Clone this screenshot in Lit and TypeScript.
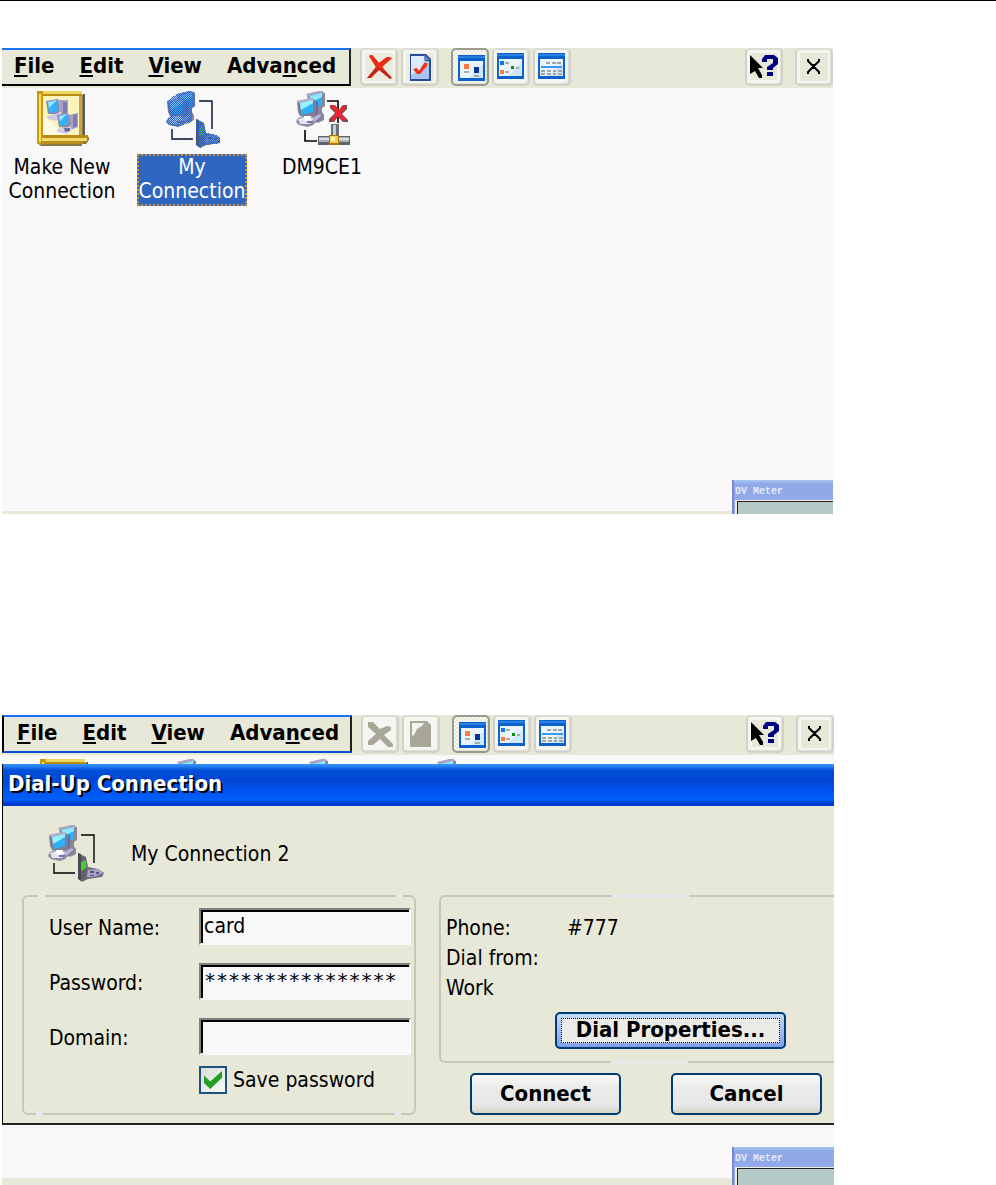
import { LitElement, html, svg, css, nothing } from "lit";
import { customElement, property } from "lit/decorators.js";

const computers = svg`
  <g>
    <path d="M11 3L24 0L29 2V15L26 17V21L28 24V29L22 32L14 24Z" fill="#8a8798"/>
    <path d="M10 3L23 0H27V3L12 6Z" fill="#aca6c6"/>
    <path d="M13 5L26 2V14L15 17Z" fill="#27b4f2"/>
    <path d="M14 5L26 2V6L14 12Z" fill="#8fe8fc"/>
    <path d="M17 11L22 10V23L27 24L21 31L15 33V24Z" fill="#6c6aa8"/>
    <path d="M1 10L16 7L20 10V22L17 26L4 25L2 21Z" fill="#807c94"/>
    <path d="M1 10L16 7L18 9L3 12Z" fill="#b8b4d0"/>
    <path d="M4 12L17 9V21L6 24Z" fill="#2cb2f4"/>
    <path d="M4 12L17 9V12L5 19Z" fill="#9af0ff"/>
    <path d="M2 27L7 25H17L24 22L27 24L17 34L12 36L3 34L0 31Z" fill="#8e8ba0"/>
    <path d="M2 28L8 26L18 27L14 33H4Z" fill="#e4e2f2"/>
    <path d="M8 25H15V29L9 30Z" fill="#ffffff"/>
    <path d="M17 27L24 23L25 25L18 31Z" fill="#bbb6dd"/>
    <rect x="11" y="30" width="5" height="2" fill="#7673a8"/>
  </g>`;

const bookIcon = html`<svg class="glyph" viewBox="0 0 56 58" aria-hidden="true">
  <path d="M3 0H48V4H50V46H55V49L52 53H48V55H7L3 52Z" fill="#8b7a4a"/>
  <path d="M3 0H9V47L7 54L3 52Z" fill="#c89a10"/>
  <path d="M5 3H7V51H5Z" fill="#f3df6a"/>
  <path d="M9 0H48V4H9Z" fill="#ecd760"/>
  <path d="M9 3H48V5H9Z" fill="#b78b10"/>
  <path d="M9 5H47V45H9Z" fill="#fdf3bc"/>
  <path d="M9 45V24L32 45Z" fill="#fffbe2"/>
  <path d="M45 5H48V45H45Z" fill="#c9a53c"/>
  <path d="M49 3H51V45H49Z" fill="#5b5b64"/>
  <path d="M9 44H54V47H9Z" fill="#b98b12"/>
  <path d="M8 47H53V50H8Z" fill="#f0dc6c"/>
  <path d="M7 50H49V53H7Z" fill="#b8901e"/>
  <path d="M24 9L34 9V22L27 25Z" fill="#a5a2c6"/>
  <path d="M29 11H33V21L29 23Z" fill="#7f7caf"/>
  <path d="M12 10L24 8L26 20L24 23L14 23Z" fill="#8a88b4"/>
  <path d="M14 11L24 9V20L15 22Z" fill="#2fb2f6"/>
  <path d="M14 11L23 9L15 17Z" fill="#9be4ff"/>
  <path d="M13 25L25 22L27 25L22 30L14 28Z" fill="#cfcae0"/>
  <path d="M34 24L44 22V36L37 39Z" fill="#a5a2c6"/>
  <path d="M39 24L43 23V35L39 37Z" fill="#7f7caf"/>
  <path d="M23 24L34 22L37 34L34 37L25 36Z" fill="#8a88b4"/>
  <path d="M25 25L34 23V33L26 35Z" fill="#2fb2f6"/>
  <path d="M25 25L33 23L26 30Z" fill="#9be4ff"/>
  <path d="M23 38L35 36L39 38L32 43L23 41Z" fill="#d4cfe4"/>
  <path d="M30 37H36V40L31 41Z" fill="#6967a0"/>
</svg>`;

const silhouette = "M11 3L24 0L29 2V15L26 17V31L17 34L12 36L3 34L0 31L4 25L1 10ZM30 28L38 32L40 42L50 44L56 48L54 52L40 54L34 57L31 54Z";

const phoneIcon = (selected: boolean) => html`<svg class="glyph" viewBox=${selected ? "-2 0 56 58" : "0 0 56 58"} aria-hidden="true">
  <defs>
    <pattern id="dither" width="2" height="2" patternUnits="userSpaceOnUse">
      <rect width="1" height="1" fill="#2b62c4"/><rect x="1" y="1" width="1" height="1" fill="#2b62c4"/>
    </pattern>
  </defs>
  <path d="M33 10H46V38M6 38V48H27" fill="none" stroke="#000" stroke-width="1.4"/>
  ${computers}
  <path d="M30 28L38 32L40 42L50 44L56 48L54 52L40 54L34 57L31 54Z" fill="#6e6c7c"/>
  <path d="M30 28L33 29V56L30 54Z" fill="#4a4852"/>
  <path d="M33 31L38 34V54H33Z" fill="#5f6468"/>
  <path d="M33 37L38 35V43L33 46Z" fill="#44d02c"/>
  <path d="M40 45L50 44L55 48L46 52L39 52Z" fill="#a7a2c8"/>
  <path d="M42 46H46V48H42ZM48 47H51V49H48ZM42 50H46V51H42Z" fill="#565280"/>
  ${selected ? svg`
    <path d=${silhouette} fill="#2f86ec" fill-opacity=".35"/>
    <path d=${silhouette} fill="url(#dither)" shape-rendering="crispEdges"/>
    <path d="M33 10H46V38M6 38V48H27" fill="none" stroke="#2f66c0" stroke-width="1.4" stroke-dasharray="1 2"/>` : nothing}
</svg>`;

const lanIcon = html`<svg class="glyph" viewBox="-2 0 56 58" aria-hidden="true">
  <path d="M31 10H42V32M9 39V50H21" fill="none" stroke="#000" stroke-width="1.6"/>
  ${computers}
  <path d="M34 14H39L43 19L47 14H51V18L46 23L52 29V31H47L42 26L38 31H33V28L39 22L34 17Z" fill="#7b4c50"/>
  <path d="M34 14H38L43 19L46 15H50L45 22L50 29H46L42 25L37 30H34L40 22Z" fill="#ee2330"/>
  <path d="M35 33H43V46H35Z" fill="#6d7078"/><path d="M37 34H40V46H37Z" fill="#c9ced4"/>
  <path d="M22 45H54V54H22Z" fill="#5f626a"/><path d="M23 46H53V51H23Z" fill="#a9afb6"/><path d="M23 47H53V49H23Z" fill="#d8dce0"/>
  <path d="M33 44H43V54H33Z" fill="#a87a08"/><path d="M34 45H42V52H34Z" fill="#f6cf54"/><path d="M35 46H39V50H35Z" fill="#fff3b0"/>
</svg>`;

const deleteIcon = html`<svg class="tool" viewBox="0 0 28 28" aria-hidden="true">
  <rect width="28" height="28" fill="#ecebdf"/>
  <path d="M4 3L7 2L14 10L22 4L27 5L17 14L27 25L25 26L14 17L6 25L2 25L11 14Z" fill="#c02412"/>
  <path d="M4 3L7 2L14 10L22 4L27 5L17 13L20 18L14 15L9 17L11 13Z" fill="#f02c10"/>
</svg>`;
const deleteOffIcon = html`<svg class="tool" viewBox="0 0 28 28" aria-hidden="true">
  <path d="M2 2H7L14 9L21 6L25 7V10L18 15L27 24V27H22L14 19L7 25H2V21L10 14L2 7Z" fill="#a9a898"/>
</svg>`;
const checkIcon = html`<svg class="tool" viewBox="0 0 28 28" aria-hidden="true">
  <rect width="28" height="28" fill="#ecebdf"/>
  <path d="M4 1H20L25 6V28H4Z" fill="#2a4a96"/><path d="M5 3H19V8H23V26H5Z" fill="#a9c6f2"/>
  <path d="M5 3H18V14L5 22Z" fill="#dceafc"/><path d="M18 2L24 7H18Z" fill="#7088c0"/>
  <path d="M7 16L11 15L13 18L18 10L21 10V13L14 21H11Z" fill="#f2301c"/>
</svg>`;
const checkOffIcon = html`<svg class="tool" viewBox="0 0 28 28" aria-hidden="true">
  <path d="M4 1H20L26 6V28H4Z" fill="#f8f8f8"/>
  <path d="M3 1H20L24 5V27H3Z" fill="#a9a898"/><path d="M5 3H17L15 6L10 9L7 15L5 16Z" fill="#f4f4f2"/>
</svg>`;
const frame = svg`<rect width="27" height="26" fill="#0b62cc"/><rect x="2" y="6" width="23" height="17" fill="#eaf4fd"/><path d="M11 23L25 9V23Z" fill="#cfe6fb"/><rect y="1" width="27" height="2" fill="#2b7fe0"/>`;
const largeIcon = html`<svg class="tool shifted" viewBox="0 0 28 28" aria-hidden="true">${frame}
  <rect x="6" y="9" width="5" height="5" fill="#fb7a42"/><rect x="6" y="16" width="5" height="2" fill="#aaa"/>
  <rect x="16" y="12" width="5" height="6" fill="#0a329c"/><rect x="16" y="20" width="5" height="2" fill="#aaa"/></svg>`;
const smallIcon = html`<svg class="tool" viewBox="0 0 28 28" aria-hidden="true">${frame}
  <rect x="3" y="8" width="4" height="4" fill="#0b78e4"/><rect x="8" y="9" width="4" height="2" fill="#aaa"/>
  <rect x="3" y="17" width="4" height="4" fill="#fb7a42"/><rect x="8" y="18" width="4" height="2" fill="#aaa"/>
  <rect x="14" y="13" width="3" height="3" fill="#108c14"/><rect x="19" y="14" width="3" height="2" fill="#aaa"/></svg>`;
const detailIcon = html`<svg class="tool" viewBox="0 0 28 28" aria-hidden="true">${frame}
  <rect x="3" y="13" width="21" height="2" fill="#3c9af0"/>
  <path d="M8 9h4v2h-4zM14 9h4v2h-4zM19 9h4v2h-4zM3 17h4v2h-4zM9 17h4v2h-4zM15 17h3v2h-3zM20 17h4v2h-4zM3 20h4v2h-4zM9 20h4v2h-4zM15 20h3v2h-3zM20 20h4v2h-4z" fill="#a4a4a4"/></svg>`;
const helpIcon = html`<svg class="tool wide" viewBox="0 0 30 28" aria-hidden="true">
  <rect x="2" width="26" height="27" fill="#e7e8d8"/>
  <path d="M1 2L14 15H9L13 22V25H10L6 18L1 21Z" fill="#000"/>
  <path d="M13 9V6L16 2H25L29 5V11L24 15V17H18V14L24 10V6H18V9ZM18 19H24V23H18Z" fill="#000084"/></svg>`;
const closeIcon = html`<svg class="tool" viewBox="0 0 28 28" aria-hidden="true">
  <rect width="28" height="28" fill="#e7e8d8"/>
  <path d="M8 6V8L12 12H15L19 8V6M8 21V19L12 15H15L19 19V21M12 13.500H15" fill="none" stroke="#000" stroke-width="2"/></svg>`;

const base = css`
  * { box-sizing: border-box; }
  button { font: inherit; color: inherit; margin: 0; padding: 0; border: 0; background: none; }
  svg { display: block; flex: none; }
`;

@customElement("tool-bar")
export class ToolBar extends LitElement {
  @property({ type: Boolean }) inactive = false;

  static styles = [base, css`
    :host { display: block; background: #e7e8d8; font: bold 22px/24px "DejaVu Sans Condensed", "DejaVu Sans", sans-serif; font-stretch: condensed; }
    .bar { display: flex; height: 40px; }
    .menu { display: flex; gap: 25px; align-items: center; width: 349px; height: 38px; padding: 0 0 2px 12px;
      border-top: 2px solid #1a72f0; border-right: 2px solid #222; border-bottom: 2px solid #000; }
    .menu.inactive { padding-left: 13px; border-left: 2px solid #000; border-bottom-color: #0b4ed4; width: 350px; }
    u { text-decoration-thickness: 2px; text-underline-offset: 2px; text-decoration-skip-ink: none; }
    .tools { display: flex; flex: 1; gap: 3px; padding-left: 9px; }
    .key { display: flex; align-items: center; justify-content: center; width: 38px; height: 38px; border-radius: 5px;
      background: #f5f5f2; border: 2px solid #d2d1c6; border-top-color: #dddcd2; box-shadow: inset -1px -1px 1px #dddcd4; }
    .key.on { border-color: #9b9a8f; background: repeating-conic-gradient(#fafaf8 0 25%, #e7e8d8 0 50%) 0 0 / 4px 4px; }
    .gap { width: 6px; }
    .end { display: flex; gap: 12px; }
    .tool { width: 28px; height: 28px; }
    .wide { width: 30px; }
    .shifted { margin: 4px 0 0 3px; }
  `];

  render() {
    return html`<div class="bar">
      <nav class="menu ${this.inactive ? "inactive" : ""}">
        <button><u>F</u>ile</button><button><u>E</u>dit</button><button><u>V</u>iew</button><button>Adva<u>n</u>ced</button>
      </nav>
      <div class="tools">
        <button class="key" aria-label="Delete" ?disabled=${this.inactive}>${this.inactive ? deleteOffIcon : deleteIcon}</button>
        <button class="key" aria-label="Properties" ?disabled=${this.inactive}>${this.inactive ? checkOffIcon : checkIcon}</button>
        <span class="gap"></span>
        <button class="key on" aria-label="Large icons">${largeIcon}</button>
        <button class="key" aria-label="Small icons">${smallIcon}</button>
        <button class="key" aria-label="Details">${detailIcon}</button>
      </div>
      <div class="end">
        <button class="key" aria-label="Help">${helpIcon}</button>
        <button class="key" aria-label="Close">${closeIcon}</button>
      </div>
    </div>`;
  }
}

@customElement("meter-window")
export class MeterWindow extends LitElement {
  static styles = css`
    :host { display: block; overflow: hidden; background: linear-gradient(#a9c6f4, #8fa9e6 4px, #93a9ea 16px, #8fb0e8); border-left: 2px solid #7f84d8; }
    .name { padding: 4px 0 0 1px; height: 20px; box-sizing: border-box; font: bold 10px/16px "Liberation Mono", monospace; color: #e4eafc; }
    .screen { height: 20px; margin-left: 1px; border: 2px solid #eeeedc; border-width: 1px 0 0 2px; }
    .glass { height: 20px; border: 1px solid #222; border-width: 1px 0 0 1px; background: #b5cac7; }
  `;
  render() {
    return html`<div class="name">DV Meter</div><div class="screen"><div class="glass"></div></div>`;
  }
}

@customElement("dial-dialog")
export class DialDialog extends LitElement {
  static styles = [base, css`
    :host { display: block; overflow: hidden; background: #e7e8d8; border-left: 1px solid #000; border-bottom: 2px solid #222;
      font: 21px/24px "DejaVu Sans Condensed", "DejaVu Sans", sans-serif; font-stretch: condensed; color: #000; }
    h1 { margin: 0; height: 42px; padding: 8px 0 0 5px; font-size: 22px; line-height: 24px; color: #fff; text-shadow: 2px 2px 0 #000;
      background: linear-gradient(#3b93fa 0, #2078f0 3px, #0450d8 6px, #0046d2 16px, #0053f0 26px, #0060fa 36px, #003bd0 39px, #0038cc); }
    .who { display: flex; align-items: center; gap: 27px; height: 89px; padding: 6px 0 0 45px; }
    .glyph { width: 56px; height: 58px; }
    .cols { display: grid; grid-template-columns: 394px 1fr; column-gap: 23px; padding: 0 0 8px 19px; align-items: start; }
    fieldset { position: relative; margin: 0; min-width: 0; border: 2px solid #c7c7b5; border-radius: 6px; }
    fieldset::before { content: ""; position: absolute; inset: -2px; pointer-events: none; background-repeat: no-repeat; }
    .login { display: grid; grid-template-columns: 150px 1fr; row-gap: 18px; height: 220px; align-content: start; padding: 11px 3px 0 25px; }
    .login::before { background-image: linear-gradient(#e8e8f8, #e8e8f8), linear-gradient(#e8e8f8, #e8e8f8), linear-gradient(#e8e8f8, #e8e8f8), linear-gradient(#e8e8f8, #e8e8f8);
      background-size: 7px 2px; background-position: 16px 0, 374px 0, 14px 100%, 372px 100%; }
    .login label { align-self: center; padding-top: 2px; }
    .text { width: 100%; height: 37px; margin: 0; border-radius: 0; font: inherit; color: #000; background: #f8f8f8; outline: none; padding: 0 0 2px 3px;
      border: 2px solid #f8f8f8; border-top-color: #808080; border-left-color: #808080; box-shadow: inset 2px 2px 0 #000; }
    .stars { font-family: "DejaVu Sans Mono", monospace; font-size: 20px; font-stretch: normal; padding-bottom: 4px; }
    .login .save label { padding: 0; }
    .save { grid-column: 2; display: flex; gap: 6px; align-items: center; margin-top: -7px; }
    .tick { appearance: none; width: 28px; height: 28px; margin: 0; border: 2px solid #1c5180; display: grid; place-items: center; background: linear-gradient(135deg, #dcdcd8, #f8f8f8); }
    .tick:checked::before { content: ""; width: 18px; height: 18px; background: #21a121; clip-path: polygon(0 25%, 35% 58%, 100% 0, 100% 38%, 35% 100%, 0 66%); }
    .side { min-width: 0; }
    .dial { height: 168px; border-right: 0; border-radius: 6px 0 0 6px; padding: 19px 48px 0 5px; }
    .dial::before { background-image: linear-gradient(#e8e8f8, #e8e8f8), linear-gradient(#e8e8f8, #e8e8f8); background-size: 77px 2px; background-position: 173px 0, 172px 100%; }
    dl { display: grid; grid-template-columns: 121px 1fr; row-gap: 6px; margin: 0; }
    dt, dd { margin: 0; }
    .full { grid-column: 1 / -1; }
    .push { height: 42px; border: 2px solid #003c74; border-radius: 5px; font-size: 22px; font-weight: bold; text-align: center;
      background: linear-gradient(#fafafa, #ebebea 30%, #e6e6e6 80%, #d6d4c6); }
    .props { display: block; width: 231px; height: 37px; margin: 12px 0 0 auto; padding: 4px; background: linear-gradient(#c4dcfa, #7f9fec); }
    .inner { display: block; height: 25px; line-height: 23px; background: #ebebe8; outline: 1px dotted #000; outline-offset: -1px; }
    .acts { display: flex; justify-content: flex-end; gap: 50px; padding: 10px 12px 0 0; }
    .acts .push { width: 151px; }
  `];

  render() {
    return html`
      <h1>Dial-Up Connection</h1>
      <div class="who">${phoneIcon(false)}<span>My Connection 2</span></div>
      <div class="cols">
        <fieldset class="login">
          <label for="user">User Name:</label><input class="text" id="user" value="card">
          <label for="pass">Password:</label><input class="text stars" id="pass" autocomplete="off" value="****************">
          <label for="domain">Domain:</label><input class="text" id="domain">
          <div class="save"><input class="tick" type="checkbox" id="save" checked><label for="save">Save password</label></div>
        </fieldset>
        <div class="side">
          <fieldset class="dial">
            <dl><dt>Phone:</dt><dd>#777</dd><dt class="full">Dial from:</dt><dd class="full">Work</dd></dl>
            <button class="push props"><span class="inner">Dial Properties...</span></button>
          </fieldset>
          <div class="acts"><button class="push">Connect</button><button class="push">Cancel</button></div>
        </div>
      </div>`;
  }
}

@customElement("app-root")
export class AppRoot extends LitElement {
  static styles = [base, css`
    :host { display: block; background: #fff; color: #000; border-top: 1px solid #000;
      font: 21px/24px "DejaVu Sans Condensed", "DejaVu Sans", sans-serif; font-stretch: condensed; }
    main { display: flex; flex-direction: column; gap: 201px; padding: 47px 162px 0 2px; }
    .window { position: relative; margin-right: 1px; background: #f8f8f8; overflow: hidden; }
    .lower { margin-right: 0; }
    .items { display: flex; gap: 16px; align-items: flex-start; min-height: 423px; padding: 3px 0 0 3px; }
    .item { display: flex; flex-direction: column; align-items: center; gap: 5px; width: 114px; }
    .glyph { width: 56px; height: 58px; }
    .label { padding: 1px 2px 3px; }
    .chosen { background: #2f66c0; color: #fff; outline: 2px dotted #d09030; outline-offset: -2px; }
    .peek { display: flex; gap: 74px; height: 9px; padding: 4px 0 0 35px; overflow: hidden; }
    .rest { height: 53px; }
    .status { height: 3px; background: #e7e8d8; }
    .lower .status { height: 7px; }
    meter-window { position: absolute; right: 0; bottom: 0; width: 101px; height: 34px; }
    .lower meter-window { width: 102px; height: 38px; }
  `];

  render() {
    return html`<main>
      <section class="window">
        <tool-bar></tool-bar>
        <div class="items">
          <button class="item">${bookIcon}<span class="label">Make New<br>Connection</span></button>
          <button class="item">${phoneIcon(true)}<span class="label chosen">My<br>Connection</span></button>
          <button class="item">${lanIcon}<span class="label">DM9CE1</span></button>
        </div>
        <div class="status"></div>
        <meter-window></meter-window>
      </section>
      <section class="window lower">
        <tool-bar inactive></tool-bar>
        <div class="peek">${bookIcon}${phoneIcon(false)}${lanIcon}${phoneIcon(false)}</div>
        <dial-dialog></dial-dialog>
        <div class="rest"></div>
        <div class="status"></div>
        <meter-window></meter-window>
      </section>
    </main>`;
  }
}
